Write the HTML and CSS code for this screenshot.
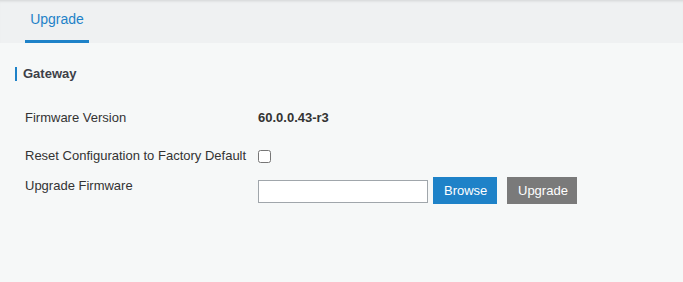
FILE: index.html
```html
<!DOCTYPE html>
<html lang="en">
<head>
    <meta charset="UTF-8">
    <title>Upgrade</title>
    <link rel="stylesheet" href="styles.css">
</head>
<body>

<div class="tabs">
    <div class="tab active">Upgrade</div>
</div>

<div class="content">
    <h3 class="section-title">Gateway</h3>
    <div class="row row-version">
        <div class="label">Firmware Version</div>
        <div class="value">60.0.0.43-r3</div>
    </div>
    <div class="row row-reset">
        <div class="label">Reset Configuration to Factory Default</div>
        <div class="value"><input type="checkbox" class="check"></div>
    </div>
    <div class="row row-upgrade">
        <div class="label">Upgrade Firmware</div>
        <div class="value">
            <input type="text" class="file-name">
            <button class="btn btn-blue">Browse</button>
            <button class="btn btn-gray">Upgrade</button>
        </div>
    </div>
</div>

</body>
</html>
```

FILE: styles.css
```css
body {
    margin: 0;
    padding: 0;
    font-family: "Liberation Sans", Arial, sans-serif;
    font-size: 13px;
    color: #333;
    background-color: #f6f8f8;
    height: 100vh;
}
.tabs {
    height: 43px;
    background-color: #eff1f2;
    box-shadow: inset 0 3px 3px -2px rgba(0, 0, 0, 0.12);
    display: flex;
    padding-left: 25px;
}
.tab {
    font-size: 14px;
    padding: 0 5px;
    line-height: 38px;
    height: 40px;
    border-bottom: 3px solid #1e82c8;
    color: #1e82c8;
    width: 54px;
    text-align: center;
}
.content {
    padding: 24px 0 0 15px;
}
.section-title {
    margin: 0;
    font-size: 13px;
    font-weight: bold;
    color: #3c4048;
    border-left: 2px solid #1e82c8;
    padding-left: 6px;
    line-height: 14px;
    height: 14px;
}
.row {
    display: flex;
    align-items: center;
    padding-left: 10px;
}
.label {
    width: 233px;
}
.value {
    display: flex;
    align-items: center;
}
.row-version {
    margin-top: 28px;
    height: 16px;
}
.row-version .value {
    font-weight: bold;
}
.row-reset {
    margin-top: 22px;
    height: 16px;
}
.check {
    margin: 2px 0 0 0;
    width: 13px;
    height: 13px;
}
.row-upgrade {
    margin-top: 15px;
    align-items: flex-start;
}
.row-upgrade .label {
    line-height: 16px;
}
.file-name {
    margin: 0;
    width: 170px;
    height: 23px;
    box-sizing: border-box;
    border: 1px solid #a0a6ab;
    background: #fff;
}
.btn {
    font-family: "Liberation Sans", Arial, sans-serif;
    font-size: 13px;
    color: #fff;
    border: none;
    height: 27px;
    padding: 0 11px;
    margin-top: -1px;
}
.btn-blue {
    background-color: #1e82c8;
    margin-left: 5px;
    width: 64px;
}
.btn-gray {
    background-color: #7a7a7a;
    margin-left: 10px;
    width: 70px;
}
```
